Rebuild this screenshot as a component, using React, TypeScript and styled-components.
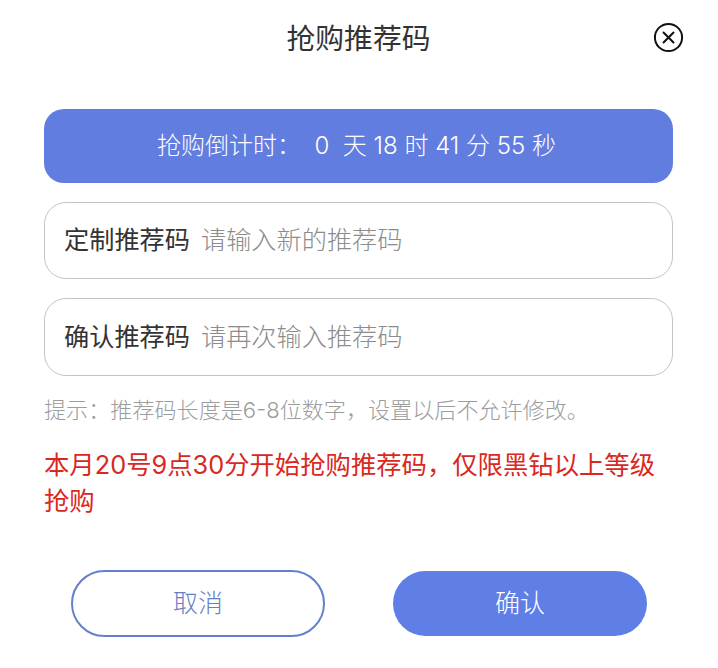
import React from "react";
import styled, { createGlobalStyle } from "styled-components";

const Global = createGlobalStyle`
  html, body { margin: 0; padding: 0; background: #fff; }
  * { box-sizing: border-box; }
  body { font-family: Inter, "Noto Sans CJK SC", sans-serif; font-weight: 300; }
`;

const Page = styled.div`
  width: 718px;
  height: 668px;
  padding: 0 45px 0 44px;
  display: flex;
  flex-direction: column;
  overflow: hidden;
`;

const Header = styled.header`
  position: relative;
  height: 109px;
  padding-top: 18px;
  text-align: center;
`;

const Title = styled.h1`
  margin: 0;
  font-size: 28.8px;
  line-height: 42px;
  font-weight: 400;
  color: #333;
`;

const Close = styled.button`
  position: absolute;
  top: 21px;
  right: -12px;
  width: 33px;
  height: 33px;
  padding: 0;
  border: none;
  background: none;
  display: flex;
`;

const Banner = styled.div`
  height: 74px;
  border-radius: 20px;
  background: #627de0;
  color: #fff;
  display: flex;
  align-items: center;
  justify-content: center;
  padding: 0 4px 5px 0;
  font-size: 24px;
  white-space: pre;
  margin-bottom: 19px;
`;

const Field = styled.div<{ $height: number }>`
  height: ${(p) => p.$height}px;
  border: 1px solid #c4c4c4;
  border-radius: 22px;
  display: flex;
  align-items: center;
  padding: 0 19px 5px;
  gap: 11px;
  font-size: 25.2px;
  margin-bottom: 19px;
`;

const Label = styled.span`
  color: #333;
  font-weight: 400;
`;

const Placeholder = styled.span`
  color: #8c8c8c;
`;

const Hint = styled.p`
  margin: -1px 0 0;
  font-size: 22.1px;
  line-height: 32px;
  color: #9c9c9c;
  white-space: nowrap;
`;

const Notice = styled.p`
  margin: 21px 0 0;
  font-size: 25.35px;
  line-height: 36px;
  color: #d9281e;
  font-weight: 400;
`;

const Actions = styled.div`
  display: flex;
  justify-content: space-between;
  align-items: center;
  margin-top: 51px;
  padding: 0 26px 0 27px;
`;

const Action = styled.button<{ $primary?: boolean }>`
  width: 254px;
  height: ${(p) => (p.$primary ? 65 : 67)}px;
  border-radius: 34px;
  border: ${(p) => (p.$primary ? "none" : "2px solid #6480cc")};
  background: ${(p) => (p.$primary ? "#5f7fe6" : "#fff")};
  color: ${(p) => (p.$primary ? "#fff" : "#6480c4")};
  font-family: inherit;
  font-weight: 300;
  font-size: 25px;
  padding: 0 0 5px;
`;

export default function App() {
  return (
    <Page>
      <Global />
      <Header>
        <Title>抢购推荐码</Title>
        <Close aria-label="关闭">
          <svg width="33" height="33" viewBox="0 0 33 33" fill="none" stroke="#111" strokeWidth="2">
            <circle cx="16.5" cy="16.5" r="13.6" />
            <path d="M11.5 11.5 L21.5 21.5 M21.5 11.5 L11.5 21.5" strokeLinecap="round" />
          </svg>
        </Close>
      </Header>
      <Banner>抢购倒计时：  0  天 18 时 41 分 55 秒</Banner>
      <Field $height={77}>
        <Label>定制推荐码</Label>
        <Placeholder>请输入新的推荐码</Placeholder>
      </Field>
      <Field $height={78}>
        <Label>确认推荐码</Label>
        <Placeholder>请再次输入推荐码</Placeholder>
      </Field>
      <Hint>提示：推荐码长度是6-8位数字，设置以后不允许修改。</Hint>
      <Notice>本月20号9点30分开始抢购推荐码，仅限黑钻以上等级抢购</Notice>
      <Actions>
        <Action>取消</Action>
        <Action $primary>确认</Action>
      </Actions>
    </Page>
  );
}
